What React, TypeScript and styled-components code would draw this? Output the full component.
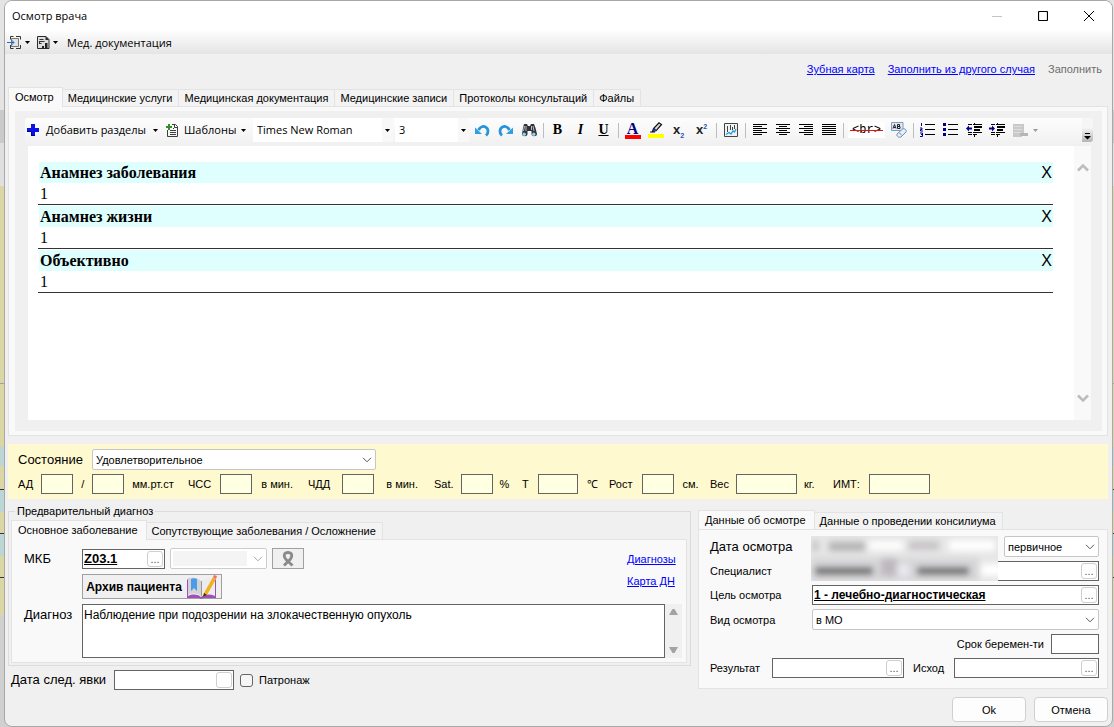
import React from "react";
import styled, { createGlobalStyle, css } from "styled-components";

const UI = '"Liberation Sans", Arial, sans-serif';
const SYSTEM = '"Open Sans", "Noto Sans", sans-serif';
const DOC = '"Liberation Serif", "Times New Roman", serif';

const GlobalStyle = createGlobalStyle`
  *, *::before, *::after { box-sizing: border-box; }
  html, body { margin: 0; padding: 0; }
  body {
    background: #dcdcdc;
    color: #000;
    font: 11px/14px ${UI};
  }
  button, input, select, textarea { font: inherit; color: inherit; margin: 0; }
  button { padding: 0; border: 0; background: none; }
`;

/* ---------- window frame ---------- */

const Desktop = styled.div`
  display: flex;
  min-height: 100vh;
  padding: 0 1px 0 4px;
  background: linear-gradient(
    #e4e4e4 0 110px, #cacaca 110px 143px, #e0e0e0 143px 186px,
    #dad7a4 186px 383px, #a0a0a0 383px 384px, #dad7a4 384px 447px,
    #bcd6d6 447px 466px, #dad7a4 466px 489px, #333 489px 490px,
    #bcd6d6 490px 512px, #dad7a4 512px 533px, #333 533px 534px,
    #bcd6d6 534px 556px, #dad7a4 556px 577px, #333 577px 578px,
    #dad7a4 578px 615px, #d0d0d0 615px
  );
`;

const Window = styled.main`
  flex: 1;
  min-width: 0;
  display: flex;
  flex-direction: column;
  border: 1px solid #a8a8a8;
  border-radius: 8px;
  background: #f0f0f0;
  overflow: hidden;
`;

const TitleBar = styled.header`
  display: flex;
  align-items: center;
  height: 30px;
  padding-left: 7px;
  background: #fff;
  font-family: ${SYSTEM};
`;

const Title = styled.h1`
  flex: 1;
  margin: 0;
  font-size: 11px;
  font-weight: 400;
`;

const CaptionButton = styled.button<{ $dim?: boolean }>`
  display: grid;
  place-items: center;
  width: 46px;
  height: 30px;
  color: ${(p) => (p.$dim ? "#c4c4c4" : "#000")};
`;

const MenuBar = styled.nav`
  display: flex;
  align-items: center;
  height: 23px;
  padding-left: 2px;
  gap: 2px;
  background: linear-gradient(#fdfdfd, #e4e4e4);
  font: 11px/16px ${SYSTEM};
`;

const MenuButton = styled.button<{ $wide?: boolean }>`
  display: flex;
  align-items: center;
  gap: 3px;
  height: 22px;
  width: ${(p) => (p.$wide ? "auto" : "28px")};
`;

const LinkBar = styled.div`
  display: flex;
  justify-content: flex-end;
  align-items: center;
  gap: 13px;
  height: 30px;
  padding-right: 10px;
  margin-bottom: 3px;
`;

const Link = styled.a`
  color: #0000ff;
  text-decoration: underline;
`;

const DisabledAction = styled.button`
  color: #6d6d6d;
`;

const Body = styled.div`
  flex: 1;
  display: flex;
  flex-direction: column;
  padding: 0 4px 4px 3px;
`;

/* ---------- tabs ---------- */

const TabList = styled.div`
  display: flex;
  align-items: flex-end;
  position: relative;
`;

const Tab = styled.button<{ $active?: boolean }>`
  white-space: nowrap;
  border: 1px solid #e3e3e3;
  ${(p) =>
    p.$active
      ? css`
          height: 20px;
          padding: 0 8px 2px 6px;
          margin-bottom: -1px;
          border-bottom: 0;
          background: #f9f9f9;
        `
      : css`
          height: 17px;
          padding: 0 6px 0 5px;
          border-left: 0;
          border-bottom: 0;
          background: #f3f3f3;
        `}
`;

const TabPanel = styled.section`
  border: 1px solid #e3e3e3;
  background: #f9f9f9;
`;

/* ---------- editor ---------- */

const EditorPanel = styled(TabPanel)`
  flex: 1;
  display: flex;
  padding: 4px 5px 4px 6px;
`;

const Editor = styled.div`
  flex: 1;
  min-width: 0;
  display: flex;
  flex-direction: column;
  padding: 7px 9px 11px 10px;
  background: #f0f0f0;
`;

const ToolStrip = styled.div`
  display: flex;
  align-items: flex-start;
  height: 28px;
  border-radius: 3px 3px 0 0;
  background: linear-gradient(#fdfdfd, #f0f0f0);
  font: 11px/16px ${SYSTEM};
`;

const ToolMenu = styled.button<{ $w: number; $gap: number }>`
  display: flex;
  align-items: center;
  gap: ${(p) => p.$gap}px;
  height: 24px;
  width: ${(p) => p.$w}px;
  padding-left: 2px;
  white-space: nowrap;
`;

const Tool = styled.button<{ $w?: number }>`
  display: grid;
  place-items: center;
  width: ${(p) => p.$w ?? 23}px;
  height: 24px;
`;

const ToolSep = styled.span`
  width: 1px;
  height: 15px;
  margin: 5px 2px 5px 3px;
  background: #bdbdbd;
`;

const Combo = styled.span<{ $w: number }>`
  display: grid;
  align-items: center;
  width: ${(p) => p.$w}px;
  height: 24px;
  margin-right: 2px;
  background: #fff;
  > * { grid-area: 1 / 1; }
  > svg { justify-self: end; margin-right: 3px; pointer-events: none; }
`;

const ComboSelect = styled.select`
  appearance: none;
  width: 100%;
  height: 24px;
  padding: 0 16px 0 4px;
  border: 0;
  background: linear-gradient(to left, #f8f8f8 11px, #fff 11px);
`;

const BrTag = styled.span`
  display: grid;
  align-items: center;
  padding: 0 4px;
  background: #fff;
  font: 12px/16px "Liberation Mono", monospace;
  > * { grid-area: 1 / 1; }
`;

const Strike = styled.span`
  height: 1px;
  margin: 0 -2px;
  background: #e81010;
`;

const Overflow = styled.button`
  display: grid;
  place-items: center;
  width: 11px;
  height: 24px;
  padding-top: 12px;
  margin-left: auto;
  border-radius: 0 3px 3px 0;
  background: linear-gradient(#f6f6f6 40%, #b4b4b4);
`;

const DocArea = styled.div`
  flex: 1;
  display: flex;
  margin: 0 2px 0 3px;
  background: #fff;
`;

const Sheet = styled.div`
  flex: 1;
  min-width: 0;
  padding: 16px 21px 0 10px;
`;

const DocSection = styled.article`
  margin-bottom: 1px;
  border-bottom: 1px solid #333;
  font: 16px/21px ${DOC};
`;

const DocHeading = styled.div`
  display: flex;
  justify-content: space-between;
  margin-left: 1px;
  padding: 0 1px;
  background: #dfffff;
  h2 { margin: 0; font-size: 16px; font-weight: 700; }
  button { font: 16px/21px ${UI}; }
`;

const DocText = styled.p`
  margin: 0 2px;
`;

const ScrollTrack = styled.div<{ $pad: number; $bg: string }>`
  display: flex;
  flex-direction: column;
  justify-content: space-between;
  align-items: center;
  width: 17px;
  padding: ${(p) => p.$pad}px 0;
  background: ${(p) => p.$bg};
`;

/* ---------- form controls ---------- */

const Row = styled.div<{ $gap?: number }>`
  display: flex;
  align-items: center;
  gap: ${(p) => p.$gap ?? 0}px;
`;

const Label = styled.label<{ $w?: number; $size?: number }>`
  flex: none;
  width: ${(p) => (p.$w ? `${p.$w}px` : "auto")};
  font-size: ${(p) => p.$size ?? 11}px;
  white-space: nowrap;
`;

const TextBox = styled.input<{ $w: number; $tint?: boolean }>`
  width: ${(p) => p.$w}px;
  height: 20px;
  padding: 0 2px;
  border: 1px solid #646464;
  background: ${(p) => (p.$tint ? "#ffffe1" : "#fff")};
`;

const SelectWrap = styled.span<{ $w?: number; $disabled?: boolean }>`
  display: grid;
  align-items: center;
  flex: ${(p) => (p.$w ? "none" : "1")};
  width: ${(p) => (p.$w ? `${p.$w}px` : "auto")};
  height: 21px;
  border: 1px solid ${(p) => (p.$disabled ? "#cccccc" : "#c6c6c6")};
  border-radius: 2px;
  background: #fff;
  > * { grid-area: 1 / 1; }
  > svg { justify-self: end; margin-right: 3px; pointer-events: none; }
`;

const Select = styled.select`
  appearance: none;
  width: 100%;
  height: 19px;
  padding: 0 18px 0 3px;
  border: 0;
  background: transparent;
  &:disabled {
    width: auto;
    height: 15px;
    margin: 0 19px 0 2px;
    background: #f0f0f0;
  }
`;

const Lookup = styled.span<{ $w?: number }>`
  display: flex;
  align-items: center;
  flex: ${(p) => (p.$w ? "none" : "1")};
  width: ${(p) => (p.$w ? `${p.$w}px` : "auto")};
  min-width: 0;
  height: 20px;
  padding-right: 1px;
  border: 1px solid #646464;
  background: #fff;
`;

const LookupInput = styled.input<{ $size?: number }>`
  flex: 1;
  min-width: 0;
  width: 0;
  height: 18px;
  padding: 0 1px;
  border: 0;
  background: transparent;
  font-size: ${(p) => p.$size ?? 12}px;
  font-weight: 700;
  text-decoration: underline;
`;

const LookupButton = styled.button`
  display: grid;
  place-items: center;
  width: 16px;
  height: 16px;
  border: 1px solid #cfcfcf;
  border-radius: 3px;
  background: #fff;
  color: #555;
`;

const PushButton = styled.button`
  width: 74px;
  height: 25px;
  border: 1px solid #d0d0d0;
  border-radius: 4px;
  background: #fdfdfd;
`;

const FlatButton = styled.button<{ $h: number; $w: number }>`
  display: flex;
  align-items: center;
  justify-content: center;
  gap: 4px;
  width: ${(p) => p.$w}px;
  height: ${(p) => p.$h}px;
  border: 1px solid #a0a0a0;
  background: #f0f0f0;
  font-size: 12px;
  font-weight: 700;
  white-space: nowrap;
`;

/* ---------- vital signs ---------- */

const Vitals = styled.section`
  display: flex;
  flex-direction: column;
  gap: 4px;
  margin-top: 8px;
  padding: 5px 10px;
  background: #fff9cf;
`;

const VitalGrid = styled.div`
  display: grid;
  grid-template-columns: 170px 120px 126px 88px 87px 101px 123px auto;
`;

/* ---------- lower area ---------- */

const Lower = styled.div`
  display: grid;
  grid-template-columns: minmax(0, 1fr) 410px;
  gap: 7px;
  margin-top: 5px;
`;

const Group = styled.fieldset`
  min-width: 0;
  margin: 0;
  padding: 2px 3px 2px 2px;
  border: 1px solid #dcdcdc;
  legend { margin-left: 4px; padding: 0 2px; }
`;

const DiagnosisPanel = styled(TabPanel)`
  display: flex;
  flex-direction: column;
  gap: 5px;
  padding: 8px 4px 4px 12px;
`;

const LinkSlot = styled.span`
  align-self: flex-start;
  width: 55px;
  margin-left: auto;
`;

const CodeRow = styled(Row)`
  ${LinkSlot} { align-self: center; }
`;

const ArchiveRow = styled(Row)`
  padding-left: 58px;
`;

const DiagnosisRow = styled(Row)`
  align-items: stretch;
  > label { padding-top: 4px; }
`;

const Diagnosis = styled.textarea`
  flex: 1;
  min-width: 0;
  height: 54px;
  padding: 3px 1px;
  border: 1px solid #646464;
  resize: none;
  overflow: hidden;
  font-size: 12px;
  line-height: 14px;
`;

const NextVisit = styled(Row)`
  padding: 4px 3px 0;
`;

const TickLabel = styled.label`
  display: flex;
  align-items: center;
  gap: 6px;
  margin-left: 6px;
`;

const Tick = styled.input`
  appearance: none;
  width: 13px;
  height: 13px;
  border: 1px solid #646464;
  border-radius: 3px;
  background: #f6f6f6;
`;

const ExamColumn = styled.div`
  padding-top: 6px;
`;

const ExamPanel = styled(TabPanel)`
  position: relative;
  display: flex;
  flex-direction: column;
  gap: 4px;
  padding: 6px 8px 10px 11px;
`;

const EndRow = styled(Row)`
  justify-content: flex-end;
`;

const Outcome = styled(Label)`
  padding-left: 9px;
`;

const Hidden = styled.div`
  position: absolute;
  left: 112px;
  right: 109px;
  top: 6px;
  height: 45px;
  overflow: hidden;
  background: #e6e6e6;
  svg { display: block; width: 100%; height: 100%; }
`;

const Footer = styled.footer`
  display: flex;
  justify-content: flex-end;
  gap: 8px;
  padding-top: 7px;
`;

/* ---------- icons ---------- */

const Caret = ({ color = "#000" }: { color?: string }) => (
  <svg width="5" height="3" viewBox="0 0 5 3" aria-hidden><path d="M0 0h5L2.5 3z" fill={color} /></svg>
);

const Chevron = ({ color = "#555" }: { color?: string }) => (
  <svg width="10" height="6" viewBox="0 0 10 6" aria-hidden>
    <path d="M1 .8l4 4 4-4" fill="none" stroke={color} />
  </svg>
);

const ScrollArrow = ({ down }: { down?: boolean }) => (
  <svg width="12" height="9" viewBox="0 0 12 9" aria-hidden>
    <path d={down ? "M1 1.5l5 5 5-5" : "M1 7.5l5-5 5 5"} fill="none" stroke="#bdbdbd" strokeWidth="2.6" />
  </svg>
);

const Triangle = ({ down }: { down?: boolean }) => (
  <svg width="9" height="6" viewBox="0 0 9 6" aria-hidden>
    <path d={down ? "M0 0h9L5.5 6h-2z" : "M0 6h9L5.5 0h-2z"} fill="#a3a3a3" />
  </svg>
);

const ImportIcon = () => (
  <svg width="15" height="15" viewBox="0 0 15 15" fill="none" aria-hidden>
    <path d="M4.500 3.500h7v8h-7z" fill="#e3e3e3" stroke="#777" />
    <path d="M3.500 4.500v-3h3M9 1.500h4.500v3M13.500 10v3.500H9M6.500 13.500h-3V10" stroke="#333" />
    <path d="M0 7.500h7M4.500 5l2.500 2.500L4.500 10" stroke="#1e6fc8" />
  </svg>
);

const ReportIcon = () => (
  <svg width="13" height="15" viewBox="0 0 13 15" aria-hidden>
    <path d="M.5 1.500h8.500l3 3v9H.5z" fill="#dedede" stroke="#2b2b2b" />
    <path d="M8.500 1v4H12z" fill="#2b2b2b" />
    <path d="M2.500 4.500h4M2.500 6.500h5M2.500 8.500h2M2.500 6v3" stroke="#333" fill="none" />
    <path d="M5 11h2v2H5zM8 8h2.500v5H8z" fill="#222" />
  </svg>
);

const PlusIcon = () => (
  <svg width="12" height="12" viewBox="0 0 12 12" aria-hidden>
    <path d="M4 0h4v4h4v4H8v4H4V8H0V4h4z" fill="#0b12e6" />
    <path d="M4.500 8v3.500H8M0 7.500h4" stroke="#00007c" fill="none" />
  </svg>
);

const TemplateIcon = () => (
  <svg width="13" height="15" viewBox="0 0 13 15" fill="none" aria-hidden>
    <path d="M6 1.500h3.500l2 2v10h-10V7" stroke="#3d3d3d" />
    <path d="M8.500 1.500v3h3M7 5.500h1M4 7.500h6M4 9.500h6M4 11.500h6" stroke="#3d3d3d" />
    <path d="M3 1v6M0 4h6" stroke="#2f8f2f" strokeWidth="2" />
  </svg>
);

const UndoIcon = ({ flip }: { flip?: boolean }) => (
  <svg width="15" height="13" viewBox="0 0 15 13" aria-hidden>
    <g transform={flip ? "matrix(-1 0 0 1 15 0)" : undefined}>
      <path d="M3.500 6C5 3 8 1.800 10.500 3c3 1.500 3.500 6 .500 8.500" fill="none" stroke="#2594d8" strokeWidth="2.800" />
      <path d="M0 3.500V10h7z" fill="#2f9fe0" />
    </g>
  </svg>
);

const BinocularsIcon = () => (
  <svg width="16" height="14" viewBox="0 0 16 14" aria-hidden>
    <path d="M3 1h3l1 2h2l1-2h3l1.500 4 1.500 6c0 3-5.500 3-5.500 0V8h-4v3c0 3-5.500 3-5.500 0l1-6z" fill="#30353b" />
    <path d="M3.500 3l-1 5M5 3v5M12 3l1 5M10.500 3v4" stroke="#b8bcc2" fill="none" />
    <circle cx="3.200" cy="11.300" r="1.700" fill="#8fd0ef" />
    <circle cx="12.800" cy="11.300" r="1.700" fill="#8fd0ef" />
  </svg>
);

const Glyph = styled.span<{ $kind?: "b" | "i" | "u" }>`
  font: ${(p) => (p.$kind === "i" ? "italic " : "")}700 14px/16px ${DOC};
  text-decoration: ${(p) => (p.$kind === "u" ? "underline" : "none")};
`;

const ColorA = styled.span`
  width: 16px;
  height: 17px;
  border-bottom: 4px solid #ff0000;
  color: #000080;
  font: 700 16px/13px ${DOC};
  text-align: center;
`;

const Script = styled.span`
  font: 700 13px/16px ${UI};
  color: #222;
  sub, sup { font-size: 7px; line-height: 1px; color: #2850b4; }
`;

const HighlightIcon = () => (
  <svg width="16" height="16" viewBox="0 0 16 16" aria-hidden>
    <path d="M0 12h16v4H0z" fill="#ffff00" />
    <path d="M4.500 9.500l1-3L11 .8l2.500 1.700L8 8.800z" fill="#d8d8d8" stroke="#111" strokeWidth="1.200" />
    <path d="M5.500 6.500l2 2" stroke="#1b2e9a" strokeWidth="2" />
    <path d="M2 10h5" stroke="#111" />
  </svg>
);

const ChartIcon = () => (
  <svg width="14" height="14" viewBox="0 0 14 14" fill="none" aria-hidden>
    <path d="M.5.5h13v13H.5z" fill="#eef3f6" stroke="#444" />
    <path d="M3.500 3v6M6.500 2v5M8.500 4v3M10.500 2v4" stroke="#444" />
    <path d="M2 11.500l3-2 2 1.500 2-3 1.500 1L12 6" stroke="#2a9bd6" strokeWidth="1.300" />
  </svg>
);

type Align = "left" | "center" | "right" | "justify";

const AlignIcon = ({ kind }: { kind: Align }) => (
  <svg width="14" height="12" viewBox="0 0 14 12" aria-hidden>
    {[0, 1, 2, 3, 4, 5].map((i) => {
      const w = kind === "justify" || i % 2 === 0 ? 14 : kind === "center" ? 8 : 9;
      const x = kind === "right" ? 14 - w : kind === "center" ? (14 - w) / 2 : 0;
      return <rect key={i} x={x} y={i * 2} width={w} height="1" fill="#000" />;
    })}
  </svg>
);

const CleanIcon = () => (
  <svg width="16" height="16" viewBox="0 0 16 16" fill="none" aria-hidden>
    <path d="M.5.500h11.500v8H.5z" fill="#dfe8f4" stroke="#7f9cc0" />
    <path d="M2 6.500l1.500-4 1.500 4M2.500 5.500h2M6.500 2.500v4h2.500v-2h-2.500 2v-2z" stroke="#222" />
    <path d="M6 12l5.500-5c2-1 4.500 1 3.500 3l-5 5c-2 1-5-1-4-3z" fill="#e6edf6" stroke="#6f8db5" />
    <path d="M8 10.500l3 3" stroke="#6f8db5" />
  </svg>
);

const ListIcon = ({ numbered }: { numbered?: boolean }) => (
  <svg width="15" height="14" viewBox="0 0 15 14" aria-hidden>
    {numbered ? (
      <path d="M1.500 0v3M0 5h2v1.500H.500V8H3M0 10h2.500v3.500H0M1 11.500h1" stroke="#00008b" fill="none" />
    ) : (
      <path d="M0 0h3v3H0zM0 5h3v3H0zM0 10h3v3H0z" fill="#00008b" />
    )}
    <path d="M5 1h10v1H5zM5 6h10v1H5zM5 11h10v1H5z" fill="#000" />
  </svg>
);

const IndentIcon = ({ out }: { out?: boolean }) => (
  <svg width="16" height="14" viewBox="0 0 16 14" aria-hidden>
    <path d="M2 1h4v1H2zM7 1h9v1H7zM8 3h8v2H8zM8 6h6v2H8zM7 9h9v1H7zM2 9h4v1H2zM7 11h4v1H7zM2 11h4v1H2zM8 12h1v2H8zM8 0h1v1H8z" fill="#000" />
    <path d={out ? "M0 5.500l3-3v2h3v2H3v2z" : "M6 5.500l-3-3v2H0v2h3v2z"} fill="#00008b" />
  </svg>
);

const DocMinusIcon = () => (
  <svg width="16" height="15" viewBox="0 0 16 15" aria-hidden>
    <path d="M1 1h11v9h-2v4H1z" fill="#c9c9c9" />
    <path d="M2 3.500h8M2 6.500h8M2 9.500h7" stroke="#dedede" />
    <path d="M8 10h8v3H8z" fill="#b5b5b5" />
  </svg>
);

const RibbonIcon = () => (
  <svg width="14" height="16" viewBox="0 0 14 16" aria-hidden>
    <path d="M4.500 8C2 4 3.500 1.500 7 1.500S12 4 9.500 8L3 14.500M4.500 8l7 6.500" fill="none" stroke="#8a8a8a" strokeWidth="2.800" />
  </svg>
);

const BookIcon = () => (
  <svg width="32" height="24" viewBox="0 0 32 24" aria-hidden>
    <path d="M1 5l1-1v17c5-2 9-2 13 1 4-3 9-3 14-1V4h1v19H18c-2 1-4 1-5 0H1z" fill="#a04fb8" />
    <path d="M2 3c5-1 9-1 13 3v15c-4-3-8-3-13-1z" fill="#d3d3d6" />
    <path d="M29 3c-5-1-9-1-13 3v15c4-3 8-3 13-1z" fill="#ececee" />
    <path d="M15.500 6v15" stroke="#999" />
    <path d="M5 4c2-1 4-1 6 0v12l-3-3-3 3z" fill="#4a9be8" />
    <path d="M17 22l1-4L27 2l3 2-9 16z" fill="#f0b21c" />
    <path d="M27 2l1-2 3 1-1 3z" fill="#ee6a78" />
    <path d="M17 22l1-4 3 2z" fill="#3c2f20" />
  </svg>
);

const BlurredText = () => (
  <svg viewBox="0 0 187 45" preserveAspectRatio="none" aria-hidden>
    <defs>
      <filter id="soft" x="-20%" y="-60%" width="140%" height="220%">
        <feGaussianBlur stdDeviation="3" />
      </filter>
    </defs>
    <g filter="url(#soft)">
      <rect x="0" y="22" width="168" height="23" fill="#d6d6d8" />
      <rect x="58" y="5" width="34" height="9" fill="#fff" />
      <rect x="138" y="4" width="46" height="11" fill="#fff" />
      <rect x="170" y="28" width="22" height="12" fill="#fff" />
      <rect x="2" y="5" width="5" height="10" fill="#bbb" />
      <rect x="18" y="6" width="36" height="9" fill="#b4b4b4" />
      <rect x="98" y="5" width="30" height="9" fill="#c8c4c8" />
      <rect x="70" y="22" width="16" height="18" fill="#bdb8c0" />
      <rect x="86" y="28" width="12" height="12" fill="#e8e8f0" />
      <rect x="4" y="31" width="58" height="8" fill="#6c6c6c" />
      <rect x="106" y="31" width="52" height="8" fill="#6c6c6c" />
    </g>
  </svg>
);

/* ---------- page ---------- */

const SECTIONS = ["Анамнез заболевания", "Анамнез жизни", "Объективно"];

const VITALS = [
  { id: "hr", label: "ЧСС", w: 32, gap: 9, unit: "в мин." },
  { id: "rr", label: "ЧДД", w: 32, gap: 12, unit: "в мин." },
  { id: "sat", label: "Sat.", w: 32, gap: 7, unit: "%" },
  { id: "temp", label: "Т", w: 40, gap: 9, unit: "℃" },
  { id: "height", label: "Рост", w: 32, gap: 9, unit: "см." },
  { id: "weight", label: "Вес", w: 61, gap: 7, unit: "кг." },
  { id: "bmi", label: "ИМТ:", w: 61, gap: 9, unit: "" },
];

const Browse = ({ label, text = "..." }: { label: string; text?: string }) => (
  <LookupButton type="button" aria-label={label}>{text}</LookupButton>
);

export default function App() {
  return (
    <>
      <GlobalStyle />
      <Desktop>
        <Window>
          <TitleBar>
            <Title>Осмотр врача</Title>
            <CaptionButton $dim aria-label="Свернуть">
              <svg width="10" height="10" aria-hidden><path d="M0 5.500h10" stroke="currentColor" /></svg>
            </CaptionButton>
            <CaptionButton aria-label="Развернуть">
              <svg width="10" height="10" aria-hidden><rect x=".5" y=".5" width="9" height="9" rx="1" fill="none" stroke="currentColor" strokeWidth="1.200" /></svg>
            </CaptionButton>
            <CaptionButton aria-label="Закрыть">
              <svg width="10" height="10" aria-hidden><path d="M0 0l10 10M10 0L0 10" stroke="currentColor" /></svg>
            </CaptionButton>
          </TitleBar>

          <MenuBar>
            <MenuButton aria-label="Импорт"><ImportIcon /><Caret /></MenuButton>
            <MenuButton aria-label="Отчёты"><ReportIcon /><Caret /></MenuButton>
            <MenuButton $wide>Мед. документация</MenuButton>
          </MenuBar>

          <LinkBar>
            <Link href="#teeth">Зубная карта</Link>
            <Link href="#case">Заполнить из другого случая</Link>
            <DisabledAction disabled>Заполнить</DisabledAction>
          </LinkBar>

          <Body>
            <TabList role="tablist">
              <Tab role="tab" $active aria-selected>Осмотр</Tab>
              {["Медицинские услуги", "Медицинская документация", "Медицинские записи", "Протоколы консультаций", "Файлы"].map((t) => (
                <Tab role="tab" key={t}>{t}</Tab>
              ))}
            </TabList>

            <EditorPanel>
              <Editor>
                <ToolStrip role="toolbar">
                  <ToolMenu $w={139} $gap={7}><PlusIcon />Добавить разделы<Caret /></ToolMenu>
                  <ToolMenu $w={89} $gap={5}><TemplateIcon />Шаблоны<Caret /></ToolMenu>
                  <Combo $w={140}>
                    <ComboSelect aria-label="Шрифт"><option>Times New Roman</option></ComboSelect><Caret />
                  </Combo>
                  <Combo $w={74}>
                    <ComboSelect aria-label="Размер"><option>3</option></ComboSelect><Caret />
                  </Combo>
                  <Tool aria-label="Отменить"><UndoIcon /></Tool>
                  <Tool aria-label="Повторить"><UndoIcon flip /></Tool>
                  <Tool aria-label="Найти"><BinocularsIcon /></Tool>
                  <ToolSep />
                  <Tool><Glyph $kind="b">B</Glyph></Tool>
                  <Tool><Glyph $kind="i">I</Glyph></Tool>
                  <Tool><Glyph $kind="u">U</Glyph></Tool>
                  <ToolSep />
                  <Tool><ColorA>A</ColorA></Tool>
                  <Tool aria-label="Выделение"><HighlightIcon /></Tool>
                  <Tool><Script>x<sub>2</sub></Script></Tool>
                  <Tool><Script>x<sup>2</sup></Script></Tool>
                  <ToolSep />
                  <Tool aria-label="График"><ChartIcon /></Tool>
                  <ToolSep />
                  <Tool aria-label="По левому краю"><AlignIcon kind="left" /></Tool>
                  <Tool aria-label="По центру"><AlignIcon kind="center" /></Tool>
                  <Tool aria-label="По правому краю"><AlignIcon kind="right" /></Tool>
                  <Tool aria-label="По ширине"><AlignIcon kind="justify" /></Tool>
                  <ToolSep />
                  <Tool $w={41}><BrTag><span>&lt;br&gt;</span><Strike /></BrTag></Tool>
                  <Tool aria-label="Очистить формат"><CleanIcon /></Tool>
                  <ToolSep />
                  <Tool aria-label="Нумерация"><ListIcon numbered /></Tool>
                  <Tool aria-label="Маркеры"><ListIcon /></Tool>
                  <Tool aria-label="Уменьшить отступ"><IndentIcon out /></Tool>
                  <Tool aria-label="Увеличить отступ"><IndentIcon /></Tool>
                  <Tool aria-label="Удалить документ" disabled><DocMinusIcon /></Tool>
                  <Tool $w={9} aria-label="Ещё" disabled><Caret color="#9a9a9a" /></Tool>
                  <Overflow aria-label="Параметры панели">
                    <svg width="7" height="7" viewBox="0 0 7 7" aria-hidden><path d="M1 0h5v1H1zM0 3h7L3.500 6.500z" fill="#000" /></svg>
                  </Overflow>
                </ToolStrip>

                <DocArea>
                  <Sheet>
                    {SECTIONS.map((name) => (
                      <DocSection key={name}>
                        <DocHeading>
                          <h2>{name}</h2>
                          <button type="button">X</button>
                        </DocHeading>
                        <DocText>1</DocText>
                      </DocSection>
                    ))}
                  </Sheet>
                  <ScrollTrack $pad={17} $bg="#f9f9f9"><ScrollArrow /><ScrollArrow down /></ScrollTrack>
                </DocArea>
              </Editor>
            </EditorPanel>

            <Vitals>
              <Row>
                <Label $w={74} $size={13} htmlFor="state">Состояние</Label>
                <SelectWrap $w={284}>
                  <Select id="state"><option>Удовлетворительное</option></Select><Chevron />
                </SelectWrap>
              </Row>
              <VitalGrid>
                <Row $gap={8}>
                  <Label htmlFor="sys">АД</Label>
                  <TextBox id="sys" $w={32} $tint />
                  <Label htmlFor="dia">/</Label>
                  <TextBox id="dia" $w={32} $tint />
                  <span>мм.рт.ст</span>
                </Row>
                {VITALS.map((v) => (
                  <Row $gap={v.gap} key={v.id}>
                    <Label htmlFor={v.id}>{v.label}</Label>
                    <TextBox id={v.id} $w={v.w} $tint />
                    {v.unit && <span>{v.unit}</span>}
                  </Row>
                ))}
              </VitalGrid>
            </Vitals>

            <Lower>
              <div>
                <Group>
                  <legend>Предварительный диагноз</legend>
                  <TabList role="tablist">
                    <Tab role="tab" $active aria-selected>Основное заболевание</Tab>
                    <Tab role="tab">Сопутствующие заболевания / Осложнение</Tab>
                  </TabList>
                  <DiagnosisPanel>
                    <CodeRow $gap={5}>
                      <Label $w={53} $size={13} htmlFor="icd">МКБ</Label>
                      <Lookup $w={83}>
                        <LookupInput id="icd" $size={13} defaultValue="Z03.1" />
                        <Browse label="Выбрать код" />
                      </Lookup>
                      <SelectWrap $w={97} $disabled>
                        <Select disabled aria-label="Характер" /><Chevron color="#a8a8a8" />
                      </SelectWrap>
                      <FlatButton $w={32} $h={21} aria-label="Онкология"><RibbonIcon /></FlatButton>
                      <LinkSlot><Link href="#diagnoses">Диагнозы</Link></LinkSlot>
                    </CodeRow>
                    <ArchiveRow>
                      <FlatButton $w={140} $h={25}>Архив пациента<BookIcon /></FlatButton>
                      <LinkSlot><Link href="#dn">Карта ДН</Link></LinkSlot>
                    </ArchiveRow>
                    <DiagnosisRow>
                      <Label $w={58} $size={13} htmlFor="diagnosis">Диагноз</Label>
                      <Diagnosis id="diagnosis" defaultValue="Наблюдение при подозрении на злокачественную опухоль" />
                      <ScrollTrack $pad={5} $bg="#f0f0f0"><Triangle /><Triangle down /></ScrollTrack>
                    </DiagnosisRow>
                  </DiagnosisPanel>
                </Group>
                <NextVisit>
                  <Label $w={103} $size={13} htmlFor="next">Дата след. явки</Label>
                  <Lookup $w={120}>
                    <LookupInput id="next" />
                    <Browse label="Календарь" text="" />
                  </Lookup>
                  <TickLabel>
                    <Tick type="checkbox" />
                    Патронаж
                  </TickLabel>
                </NextVisit>
              </div>

              <ExamColumn>
                <TabList role="tablist">
                  <Tab role="tab" $active aria-selected>Данные об осмотре</Tab>
                  <Tab role="tab">Данные о проведении консилиума</Tab>
                </TabList>
                <ExamPanel>
                  <Row>
                    <Label $w={294} $size={13} htmlFor="visit">Дата осмотра</Label>
                    <SelectWrap>
                      <Select id="visit"><option>первичное</option></Select><Chevron />
                    </SelectWrap>
                  </Row>
                  <Row>
                    <Label $w={102} htmlFor="doctor">Специалист</Label>
                    <Lookup><LookupInput id="doctor" /><Browse label="Выбрать специалиста" /></Lookup>
                  </Row>
                  <Row>
                    <Label $w={102} htmlFor="goal">Цель осмотра</Label>
                    <Lookup>
                      <LookupInput id="goal" defaultValue="1 - лечебно-диагностическая" />
                      <Browse label="Выбрать цель" />
                    </Lookup>
                  </Row>
                  <Row>
                    <Label $w={102} htmlFor="kind">Вид осмотра</Label>
                    <SelectWrap>
                      <Select id="kind"><option>в МО</option></Select><Chevron />
                    </SelectWrap>
                  </Row>
                  <EndRow $gap={7}>
                    <Label htmlFor="term">Срок беремен-ти</Label>
                    <TextBox id="term" $w={48} />
                  </EndRow>
                  <Row>
                    <Label $w={62} htmlFor="result">Результат</Label>
                    <Lookup $w={132}><LookupInput id="result" /><Browse label="Выбрать результат" /></Lookup>
                    <Outcome $w={50} htmlFor="outcome">Исход</Outcome>
                    <Lookup><LookupInput id="outcome" /><Browse label="Выбрать исход" /></Lookup>
                  </Row>
                  <Hidden><BlurredText /></Hidden>
                </ExamPanel>
              </ExamColumn>
            </Lower>

            <Footer>
              <PushButton type="submit">Ok</PushButton>
              <PushButton type="button">Отмена</PushButton>
            </Footer>
          </Body>
        </Window>
      </Desktop>
    </>
  );
}
